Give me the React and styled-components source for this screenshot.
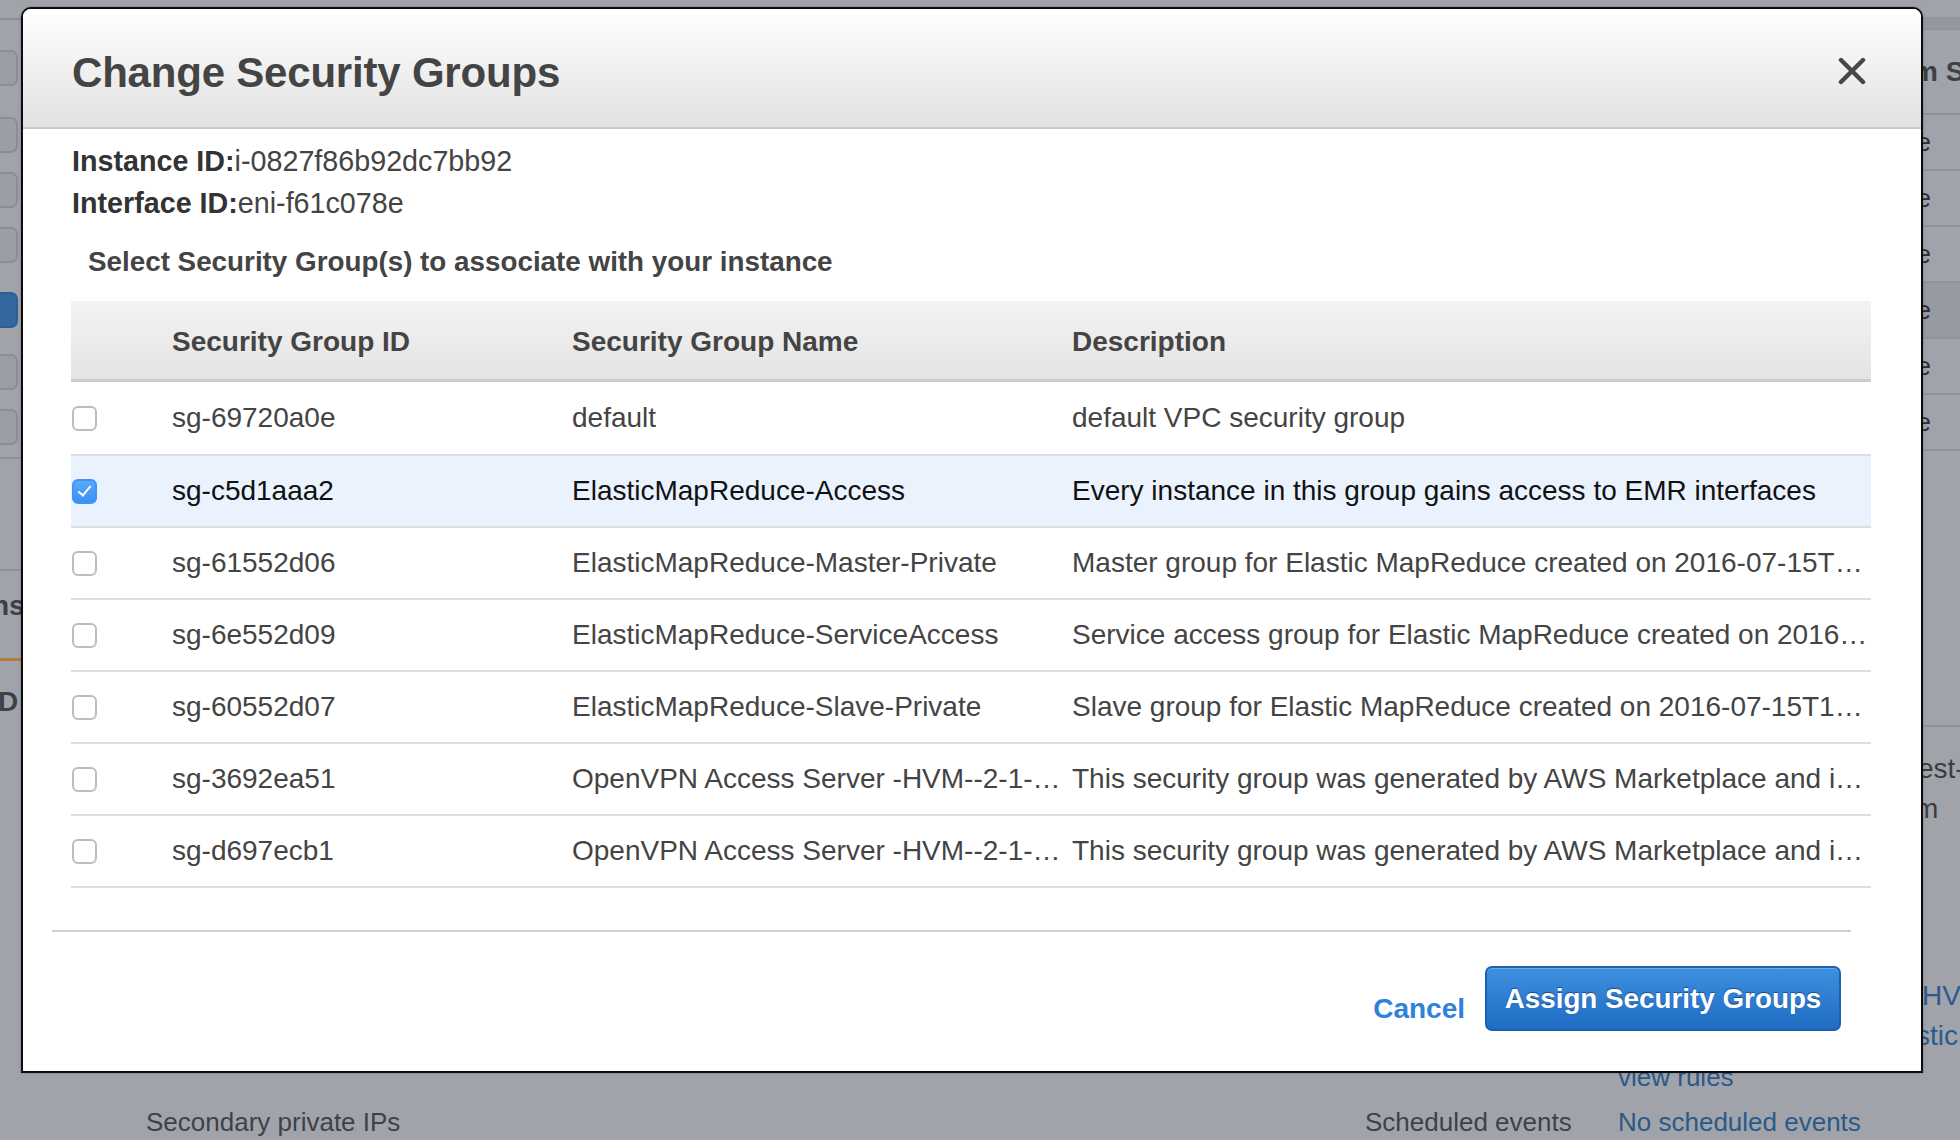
import React from "react";
import styled, { createGlobalStyle } from "styled-components";

const GlobalStyle = createGlobalStyle`
  html, body { margin: 0; padding: 0; }
  body {
    width: 1960px;
    height: 1140px;
    overflow: hidden;
    font-family: "Liberation Sans", Arial, Helvetica, sans-serif;
    -webkit-font-smoothing: antialiased;
  }
  * { box-sizing: border-box; }
`;

/* ---------- dimmed page behind the dialog ---------- */

const Page = styled.div`
  position: relative;
  width: 1960px;
  height: 1140px;
  overflow: hidden;
  background: #a0a4aa;
  display: grid;
  grid-template-columns: 21px 1fr 64px;
  grid-template-rows: 1fr;
`;

const LeftRail = styled.div`
  display: flex;
  flex-direction: column;
  padding-top: 18px;
  overflow: hidden;
`;

const RailRule = styled.div`
  height: 2px;
  background: #8d9197;
  margin: ${(p) => p.$m || "0"};
`;

const RailButton = styled.div`
  height: 36px;
  width: 32px;
  margin-left: -14px;
  margin-top: ${(p) => p.$mt || 20}px;
  border-radius: 7px;
  border: 2px solid ${(p) => (p.$blue ? "#2d5f97" : "#8a8e94")};
  background: ${(p) => (p.$blue ? "#34679f" : "#9b9fa5")};
`;

const RailText = styled.div`
  margin-top: ${(p) => p.$mt || 0}px;
  margin-left: ${(p) => p.$ml || 0}px;
  font-size: 28px;
  font-weight: bold;
  line-height: 34px;
  color: #3d4147;
  white-space: nowrap;
`;

const RailAccent = styled.div`
  height: 3px;
  background: #b67c3c;
  margin-top: ${(p) => p.$mt || 0}px;
`;

const Middle = styled.div`
  display: flex;
  flex-direction: column;
  justify-content: flex-end;
`;

const BottomInfo = styled.div`
  display: grid;
  grid-template-columns: 1219px 253px auto;
  grid-template-rows: 45px 45px;
  padding-left: 125px;
  margin-bottom: -5px;
  align-items: center;
  font-size: 26px;
  color: #3e4248;
  white-space: nowrap;
`;

const BgLink = styled.span`
  color: #2c5888;
`;

const RightRail = styled.div`
  display: flex;
  flex-direction: column;
  padding-top: 17px;
  overflow: hidden;
  white-space: nowrap;
`;

const RightBand = styled.div`
  height: 13px;
  background: #94989e;
  border-bottom: 1px solid #8c9096;
`;

const RightHead = styled.div`
  height: 85px;
  padding-left: 17px;
  display: flex;
  align-items: center;
  font-size: 28px;
  font-weight: bold;
  color: #3d4147;
  border-bottom: 2px solid #8e9298;
`;

const RightRow = styled.div`
  height: 56px;
  display: flex;
  align-items: center;
  padding-left: 6px;
  font-size: 26px;
  color: #2c3036;
  border-bottom: 2px solid #90949a;
  background: ${(p) => (p.$sel ? "#969aa1" : "transparent")};
`;

const RightText = styled.div`
  margin-top: ${(p) => p.$mt || 0}px;
  padding-left: ${(p) => p.$pl || 6}px;
  font-size: 28px;
  line-height: 40px;
  color: ${(p) => (p.$link ? "#2c5a8c" : "#3a3e44")};
`;

const RightRule = styled.div`
  margin-top: ${(p) => p.$mt || 0}px;
  height: 2px;
  background: #8f9399;
`;

/* ---------- dialog ---------- */

const Dialog = styled.div`
  position: absolute;
  left: 21px;
  top: 7px;
  width: 1902px;
  height: 1066px;
  border: 2px solid #0c0c0c;
  border-radius: 10px 10px 0 0;
  background: #fff;
  display: flex;
  flex-direction: column;
  box-shadow: 0 0 3px rgba(0, 0, 0, 0.25);
`;

const Header = styled.div`
  height: 120px;
  flex: none;
  display: flex;
  align-items: center;
  justify-content: space-between;
  padding: 9px 55px 0 49px;
  background: linear-gradient(#ffffff, #e2e2e2);
  border-bottom: 2px solid #c9c9c9;
  border-radius: 8px 8px 0 0;
`;

const Title = styled.h1`
  margin: 0;
  font-size: 42px;
  font-weight: bold;
  color: #444;
  letter-spacing: -0.2px;
`;

const CloseButton = styled.button`
  border: 0;
  background: transparent;
  padding: 0;
  margin-top: -4px;
  width: 28px;
  height: 30px;
  display: flex;
  align-items: center;
  justify-content: center;
  cursor: pointer;
`;

const Body = styled.div`
  padding: 11px 50px 0 48px;
  flex: 1;
`;

const InfoLine = styled.div`
  font-size: 28.7px;
  line-height: 42px;
  color: #444;
  padding-left: 1px;
`;

const InfoLabel = styled.span`
  font-weight: bold;
  color: #333;
`;

const Prompt = styled.div`
  margin: 17px 0 18px 17px;
  font-size: 27.8px;
  line-height: 42px;
  font-weight: bold;
  color: #444;
`;

const Table = styled.div`
  display: grid;
  grid-template-columns: 101px 400px 500px minmax(0, 1fr);
  border-bottom: 2px solid #dedede;
`;

const Row = styled.div`
  display: contents;
`;

const HeadCell = styled.div`
  height: 81px;
  display: flex;
  align-items: center;
  padding-top: 3px;
  font-size: 28px;
  font-weight: bold;
  color: #444;
  background: linear-gradient(#f3f3f3, #e4e4e4);
  border-bottom: 3px solid #cdcdcd;
`;

const Cell = styled.div`
  height: 72px;
  display: flex;
  align-items: center;
  min-width: 0;
  padding-right: ${(p) => (p.$last ? "0" : "6px")};
  font-size: 28px;
  color: ${(p) => (p.$sel ? "#111" : "#444")};
  background: ${(p) => (p.$sel ? "#eaf2fd" : "#fff")};
  border-top: ${(p) => (p.$first ? "0" : "2px solid #dedede")};
`;

const CellText = styled.span`
  display: block;
  overflow: hidden;
  white-space: nowrap;
  text-overflow: ellipsis;
`;

const Check = styled.input.attrs({ type: "checkbox" })`
  appearance: none;
  -webkit-appearance: none;
  margin: 0 0 0 1px;
  width: 25px;
  height: 25px;
  border-radius: 6px;
  border: 2px solid ${(p) => (p.checked ? "#3d96f6" : "#bdbdbd")};
  background: ${(p) => (p.checked ? "linear-gradient(#5aa8fb, #3b93f3)" : "#fff")};
  position: relative;
  cursor: pointer;

  &:checked::after {
    content: "";
    position: absolute;
    left: 7px;
    top: 2px;
    width: 5px;
    height: 11px;
    border: solid #fff;
    border-width: 0 2.5px 2.5px 0;
    transform: rotate(40deg);
  }
`;

const FooterRule = styled.div`
  height: 2px;
  background: #d0d0d0;
  margin: 0 70px 0 29px;
`;

const Footer = styled.div`
  flex: none;
  height: 139px;
  display: flex;
  align-items: center;
  justify-content: flex-end;
  gap: 20px;
  padding: 0 80px 6px 0;
`;

const CancelLink = styled.button`
  border: 0;
  background: transparent;
  padding: 0;
  margin-top: 21px;
  font-family: inherit;
  font-size: 28px;
  font-weight: bold;
  color: #2f82da;
  cursor: pointer;
`;

const PrimaryButton = styled.button`
  height: 65px;
  width: 356px;
  border-radius: 7px;
  border: 2px solid #1c60b2;
  background: linear-gradient(#3e8fe0, #1f6cc2);
  color: #fff;
  font-family: inherit;
  font-size: 27.8px;
  font-weight: bold;
  text-shadow: 0 -1px 1px rgba(0, 40, 100, 0.6);
  box-shadow: inset 0 1px 0 rgba(255, 255, 255, 0.25);
  cursor: pointer;
`;

const groups = [
  { id: "sg-69720a0e", name: "default", desc: "default VPC security group" },
  {
    id: "sg-c5d1aaa2",
    name: "ElasticMapReduce-Access",
    desc: "Every instance in this group gains access to EMR interfaces",
    sel: true,
  },
  {
    id: "sg-61552d06",
    name: "ElasticMapReduce-Master-Private",
    desc: "Master group for Elastic MapReduce created on 2016-07-15T17:38:09Z",
  },
  {
    id: "sg-6e552d09",
    name: "ElasticMapReduce-ServiceAccess",
    desc: "Service access group for Elastic MapReduce created on 2016-07-15T17:38:09Z",
  },
  {
    id: "sg-60552d07",
    name: "ElasticMapReduce-Slave-Private",
    desc: "Slave group for Elastic MapReduce created on 2016-07-15T17:38:09Z",
  },
  {
    id: "sg-3692ea51",
    name: "OpenVPN Access Server -HVM--2-1-4-AutogenByAWSMP-",
    desc: "This security group was generated by AWS Marketplace and is based on recommended settings",
  },
  {
    id: "sg-d697ecb1",
    name: "OpenVPN Access Server -HVM--2-1-4-AutogenByAWSMP--1",
    desc: "This security group was generated by AWS Marketplace and is based on recommended settings",
  },
];

function CloseIcon() {
  return (
    <svg width="28" height="28" viewBox="0 0 28 28">
      <path
        d="M3 3 L25 25 M25 3 L3 25"
        stroke="#474747"
        strokeWidth="4.4"
        strokeLinecap="round"
        fill="none"
      />
    </svg>
  );
}

export default function App() {
  return (
    <>
      <GlobalStyle />
      <Page>
        <LeftRail>
          <RailRule />
          <RailButton $mt={30} />
          <RailButton $mt={31} />
          <RailButton $mt={19} />
          <RailButton $mt={19} />
          <RailButton $mt={29} $blue />
          <RailButton $mt={26} />
          <RailButton $mt={19} />
          <RailRule $m="12px 0 0" />
          <RailRule $m="110px 0 0" />
          <RailText $mt={18} $ml={-8}>
            ns
          </RailText>
          <RailAccent $mt={35} />
          <RailText $mt={24} $ml={-2}>
            D
          </RailText>
        </LeftRail>
        <Middle>
          <BottomInfo>
            <span />
            <span />
            <BgLink>view rules</BgLink>
            <span>Secondary private IPs</span>
            <span>Scheduled events</span>
            <BgLink>No scheduled events</BgLink>
          </BottomInfo>
        </Middle>
        <RightRail>
          <RightBand />
          <RightHead>m Status</RightHead>
          <RightRow>ne</RightRow>
          <RightRow>ne</RightRow>
          <RightRow>ne</RightRow>
          <RightRow $sel>ne</RightRow>
          <RightRow>ne</RightRow>
          <RightRow>ne</RightRow>
          <RightRule $mt={274} />
          <RightText $mt={22} $pl={22}>
            est-1
          </RightText>
          <RightText $pl={19}>m</RightText>
          <RightText $mt={147} $pl={26} $link>
            HVM
          </RightText>
          <RightText $pl={20} $link>
            stic
          </RightText>
        </RightRail>

        <Dialog role="dialog" aria-label="Change Security Groups">
          <Header>
            <Title>Change Security Groups</Title>
            <CloseButton aria-label="Close">
              <CloseIcon />
            </CloseButton>
          </Header>
          <Body>
            <InfoLine>
              <InfoLabel>Instance ID:</InfoLabel>i-0827f86b92dc7bb92
            </InfoLine>
            <InfoLine>
              <InfoLabel>Interface ID:</InfoLabel>eni-f61c078e
            </InfoLine>
            <Prompt>Select Security Group(s) to associate with your instance</Prompt>
            <Table>
              <Row>
                <HeadCell />
                <HeadCell>Security Group ID</HeadCell>
                <HeadCell>Security Group Name</HeadCell>
                <HeadCell>Description</HeadCell>
              </Row>
              {groups.map((g, i) => (
                <Row key={g.id}>
                  <Cell $sel={g.sel} $first={i === 0}>
                    <Check checked={!!g.sel} readOnly />
                  </Cell>
                  <Cell $sel={g.sel} $first={i === 0}>
                    <CellText>{g.id}</CellText>
                  </Cell>
                  <Cell $sel={g.sel} $first={i === 0}>
                    <CellText>{g.name}</CellText>
                  </Cell>
                  <Cell $sel={g.sel} $first={i === 0} $last>
                    <CellText>{g.desc}</CellText>
                  </Cell>
                </Row>
              ))}
            </Table>
          </Body>
          <FooterRule />
          <Footer>
            <CancelLink>Cancel</CancelLink>
            <PrimaryButton>Assign Security Groups</PrimaryButton>
          </Footer>
        </Dialog>
      </Page>
    </>
  );
}
